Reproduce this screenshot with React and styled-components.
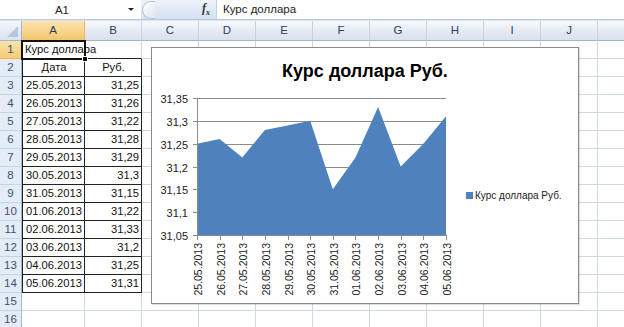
import React from 'react';
import styled, { createGlobalStyle } from 'styled-components';

const GlobalStyle = createGlobalStyle`
  html, body { margin: 0; padding: 0; background: #fff; }
  body { font-family: "Liberation Sans", Arial, sans-serif; }
`;

const COLUMNS = [
  { name: 'A', w: 63 },
  { name: 'B', w: 57 },
  { name: 'C', w: 57 },
  { name: 'D', w: 57 },
  { name: 'E', w: 57 },
  { name: 'F', w: 57 },
  { name: 'G', w: 57 },
  { name: 'H', w: 57 },
  { name: 'I', w: 57 },
  { name: 'J', w: 57 },
  { name: '', w: 40 },
];

const RATES = [
  ['25.05.2013', '31,25'],
  ['26.05.2013', '31,26'],
  ['27.05.2013', '31,22'],
  ['28.05.2013', '31,28'],
  ['29.05.2013', '31,29'],
  ['30.05.2013', '31,3'],
  ['31.05.2013', '31,15'],
  ['01.06.2013', '31,22'],
  ['02.06.2013', '31,33'],
  ['03.06.2013', '31,2'],
  ['04.06.2013', '31,25'],
  ['05.06.2013', '31,31'],
];

const Page = styled.div`
  position: relative;
  width: 624px;
  height: 327px;
  overflow: hidden;
  background: #fff;
`;

const FormulaBar = styled.div`
  display: flex;
  height: 21px;
  background: #dbe5f2;
`;

const NameBox = styled.div`
  width: 141px;
  height: 20px;
  background: #fff;
  box-sizing: border-box;
  border-bottom: 1px solid #b9c9dd;
  display: flex;
  align-items: center;
`;

const NameText = styled.span`
  width: 124px;
  text-align: center;
  font-size: 11.5px;
  color: #222;
`;

const DropArrow = styled.span`
  width: 0;
  height: 0;
  margin-left: 4px;
  border-left: 3px solid transparent;
  border-right: 3px solid transparent;
  border-top: 3px solid #222;
`;

const FxZone = styled.div`
  width: 75px;
  height: 20px;
  display: flex;
  align-items: center;
  background: linear-gradient(#eef3fa, #d5e0ef);
  border-bottom: 1px solid #b9c9dd;
  box-sizing: border-box;
`;

const Knob = styled.span`
  width: 12px;
  height: 16px;
  margin-left: 1px;
  border-radius: 9px 0 0 9px;
  border: 1px solid #b3c3d8;
  border-right: 0;
  background: linear-gradient(135deg, #ffffff, #dde6f2);
`;

const FxLabel = styled.span`
  margin-left: auto;
  margin-right: 6px;
  font-family: "Liberation Serif", serif;
  font-style: italic;
  font-weight: bold;
  font-size: 12px;
  color: #333;
  & sub { font-size: 8px; }
`;

const FormulaInput = styled.div`
  flex: 1;
  height: 20px;
  background: #fff;
  box-sizing: border-box;
  border-left: 1px solid #c4d1e2;
  border-bottom: 1px solid #b9c9dd;
  padding-left: 6px;
  font-size: 11.5px;
  line-height: 19px;
  color: #222;
`;

const HeaderRow = styled.div`
  display: flex;
  height: 20px;
`;

const Corner = styled.div`
  position: relative;
  width: 22px;
  flex: none;
  box-sizing: border-box;
  background: linear-gradient(#f3f6fb, #dbe3ee);
  border-right: 1px solid #9eb6ce;
  border-bottom: 1px solid #9eb6ce;
  &::after {
    content: '';
    position: absolute;
    right: 3px;
    bottom: 3px;
    border-left: 11px solid transparent;
    border-bottom: 11px solid #b8c8dc;
  }
`;

const ColHeader = styled.div`
  width: ${(p) => p.$w}px;
  flex: none;
  box-sizing: border-box;
  border-right: 1px solid ${(p) => (p.$active ? '#f2b64a' : '#c5d2e2')};
  border-bottom: 1px solid ${(p) => (p.$active ? '#f2b64a' : '#9eb6ce')};
  background: ${(p) =>
    p.$active
      ? 'linear-gradient(#fbe3b0, #f8d58c 55%, #f3c46a)'
      : 'linear-gradient(#f7f9fc, #e4eaf3 55%, #d8e1ec)'};
  text-align: center;
  font-size: 11.5px;
  line-height: 19px;
  color: #2c3f57;
`;

const Row = styled.div`
  display: flex;
  height: 18px;
`;

const RowHeader = styled.div`
  width: 22px;
  flex: none;
  box-sizing: border-box;
  border-right: 1px solid #9eb6ce;
  border-bottom: 1px solid ${(p) => (p.$active ? '#f2b64a' : '#c5d2e2')};
  background: ${(p) => (p.$active ? 'linear-gradient(#fbe2ac, #f5cb76)' : '#e4ecf7')};
  text-align: center;
  font-size: 11.5px;
  line-height: 17px;
  color: #3d5170;
`;

const Cell = styled.div`
  position: relative;
  width: ${(p) => p.$w}px;
  flex: none;
  box-sizing: border-box;
  border-right: 1px solid ${(p) => (p.$darkRight ? '#222' : '#d0d7e5')};
  border-bottom: 1px solid ${(p) => (p.$darkBottom ? '#222' : '#d0d7e5')};
  border-left: ${(p) => (p.$darkLeft ? '1px solid #222' : '0')};
  padding: 0 2px 0 3px;
  font-size: 11.2px;
  line-height: 17px;
  color: #111;
  text-align: ${(p) => p.$align || 'left'};
  white-space: nowrap;
  overflow: visible;
  z-index: ${(p) => (p.$top ? 2 : 1)};
`;

const Selection = styled.span`
  position: absolute;
  left: -1px;
  top: -1px;
  right: -2px;
  bottom: -2px;
  border: 2px solid #111;
  pointer-events: none;
`;

const FillHandle = styled.span`
  position: absolute;
  right: -4px;
  bottom: -4px;
  width: 4px;
  height: 4px;
  background: #111;
  border: 1px solid #fff;
`;

const Chart = styled.div`
  position: absolute;
  left: 151px;
  top: 47px;
  width: 428px;
  height: 257px;
  box-sizing: border-box;
  border: 1px solid #8a8a8a;
  background: #fff;
  box-shadow: 1px 1px 1px rgba(0, 0, 0, 0.12);
  display: flex;
  flex-direction: column;
  z-index: 5;
`;

const ChartTitle = styled.div`
  height: 40px;
  box-sizing: border-box;
  padding-top: 12px;
  text-align: center;
  font-size: 18px;
  font-weight: bold;
  line-height: 22px;
  color: #000;
`;

const ChartBody = styled.div`
  flex: 1;
  display: flex;
`;

const PlotSvg = styled.svg`
  width: 300px;
  height: 215px;
  flex: none;
  display: block;
`;

const Legend = styled.div`
  flex: 1;
  display: flex;
  align-items: center;
  padding-left: 14px;
  font-size: 10px;
  color: #222;
`;

const LegendKey = styled.span`
  width: 7px;
  height: 7px;
  margin-right: 2px;
  background: #4f81bd;
`;

const PLOT = { left: 45, right: 294, top: 10, bottom: 147 };
const MIN = 31.05;
const MAX = 31.35;
const yOf = (v) => PLOT.bottom - ((v - MIN) / (MAX - MIN)) * (PLOT.bottom - PLOT.top);
const xOf = (i) => PLOT.left + (i * (PLOT.right - PLOT.left)) / (RATES.length - 1);
const TICKS = ['31,05', '31,1', '31,15', '31,2', '31,25', '31,3', '31,35'];

function Plot() {
  const values = RATES.map((r) => parseFloat(r[1].replace(',', '.')));
  const area = [
    `${PLOT.left},${PLOT.bottom}`,
    ...values.map((v, i) => `${xOf(i).toFixed(1)},${yOf(v).toFixed(1)}`),
    `${PLOT.right},${PLOT.bottom}`,
  ].join(' ');
  return (
    <PlotSvg viewBox="0 0 300 215">
      {TICKS.map((t, k) => {
        const y = Math.round(PLOT.bottom - k * ((PLOT.bottom - PLOT.top) / 6)) + 0.5;
        return (
          <g key={t}>
            <line x1={PLOT.left} x2={PLOT.right} y1={y} y2={y} stroke="#8c8c8c" strokeWidth="1" />
            <line x1={PLOT.left - 4} x2={PLOT.left} y1={y} y2={y} stroke="#8c8c8c" strokeWidth="1" />
            <text x="36" y={y + 4} textAnchor="end" fontSize="11" fill="#222" fontFamily="Liberation Sans, Arial, sans-serif">
              {t}
            </text>
          </g>
        );
      })}
      <polygon points={area} fill="#4f81bd" />
      <line x1={PLOT.left + 0.5} x2={PLOT.left + 0.5} y1={PLOT.top} y2={PLOT.bottom} stroke="#8c8c8c" />
      <line x1={PLOT.left} x2={PLOT.right} y1={PLOT.bottom + 0.5} y2={PLOT.bottom + 0.5} stroke="#8c8c8c" />
      {RATES.map((r, i) => {
        const x = Math.round(xOf(i)) + 0.5;
        return (
          <g key={r[0]}>
            <line x1={x} x2={x} y1={PLOT.bottom} y2={PLOT.bottom + 5} stroke="#8c8c8c" />
            <text
              x={x + 4}
              y={PLOT.bottom + 8}
              textAnchor="end"
              fontSize="10.5"
              fill="#222"
              fontFamily="Liberation Sans, Arial, sans-serif"
              transform={`rotate(-90 ${x + 4} ${PLOT.bottom + 8})`}
            >
              {r[0]}
            </text>
          </g>
        );
      })}
    </PlotSvg>
  );
}

function cellsFor(rowNo) {
  if (rowNo === 1) return ['Курс доллара', ''];
  if (rowNo === 2) return ['Дата', 'Руб.'];
  if (rowNo >= 3 && rowNo <= 14) return RATES[rowNo - 3];
  return ['', ''];
}

export default function App() {
  const rows = Array.from({ length: 16 }, (_, i) => i + 1);
  return (
    <>
      <GlobalStyle />
      <Page>
        <FormulaBar>
          <NameBox>
            <NameText>A1</NameText>
            <DropArrow />
          </NameBox>
          <FxZone>
            <Knob />
            <FxLabel>
              f<sub>x</sub>
            </FxLabel>
          </FxZone>
          <FormulaInput>Курс доллара</FormulaInput>
        </FormulaBar>

        <HeaderRow>
          <Corner />
          {COLUMNS.map((c) => (
            <ColHeader key={c.name || 'K'} $w={c.w} $active={c.name === 'A'}>
              {c.name}
            </ColHeader>
          ))}
        </HeaderRow>

        {rows.map((n) => {
          const [a, b] = cellsFor(n);
          const inTable = n >= 2 && n <= 14;
          const header = n === 2;
          return (
            <Row key={n}>
              <RowHeader $active={n === 1}>{n}</RowHeader>
              {COLUMNS.map((c, ci) => {
                if (ci === 0) {
                  return (
                    <Cell
                      key={c.name}
                      $w={c.w}
                      $top={n === 1}
                      $darkRight={inTable}
                      $darkBottom={n >= 1 && n <= 14}
                      $darkLeft={inTable}
                      $align={header ? 'center' : 'left'}
                    >
                      {a}
                      {n === 1 && (
                        <Selection>
                          <FillHandle />
                        </Selection>
                      )}
                    </Cell>
                  );
                }
                if (ci === 1) {
                  return (
                    <Cell
                      key={c.name}
                      $w={c.w}
                      $darkRight={inTable}
                      $darkBottom={n >= 1 && n <= 14}
                      $align={header ? 'center' : 'right'}
                    >
                      {b}
                    </Cell>
                  );
                }
                return <Cell key={c.name || 'K'} $w={c.w} />;
              })}
            </Row>
          );
        })}

        <Chart>
          <ChartTitle>Курс доллара Руб.</ChartTitle>
          <ChartBody>
            <Plot />
            <Legend>
              <LegendKey />
              Курс доллара Руб.
            </Legend>
          </ChartBody>
        </Chart>
      </Page>
    </>
  );
}
